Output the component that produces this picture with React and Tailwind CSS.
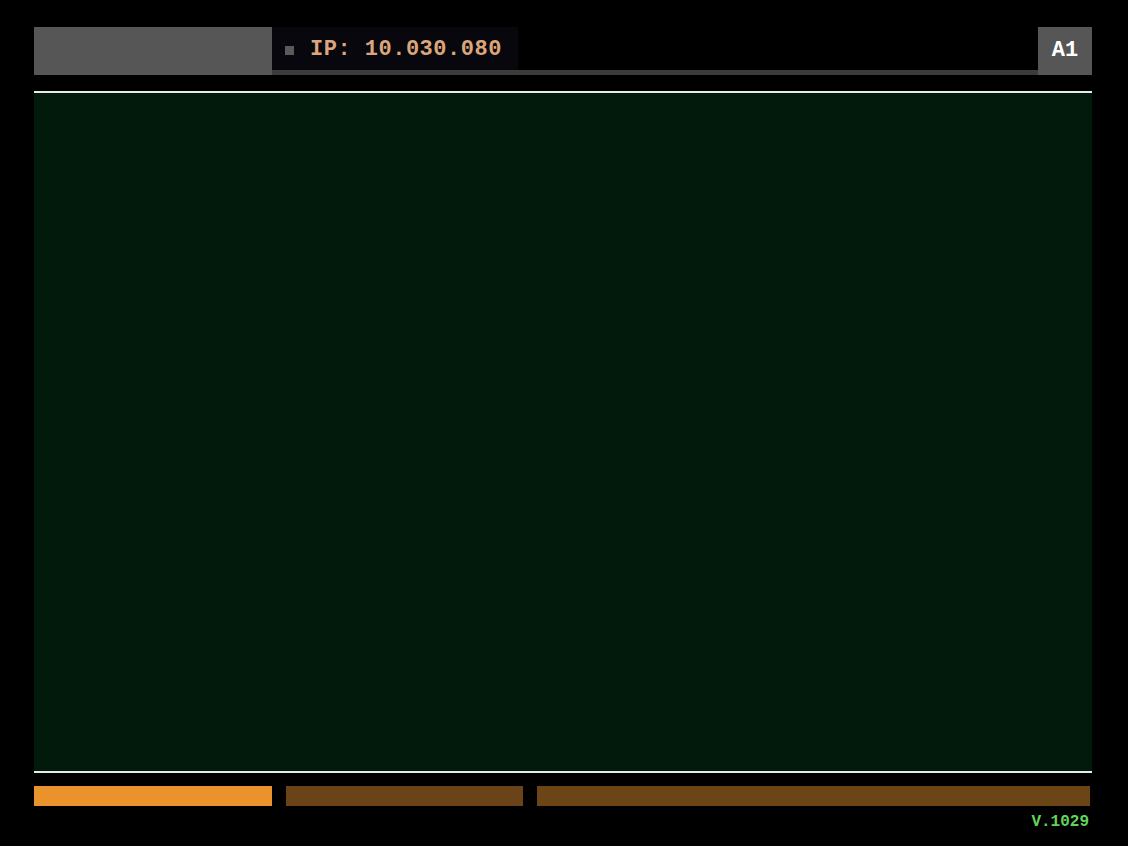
import React from 'react';

export default function App() {
    return (
        <div className="w-[1128px] h-[846px] bg-black pt-[27px] pl-[34px] pr-[36px] font-['Liberation_Mono',monospace]">
            {/* Top bar */}
            <div className="flex h-[48px]">
                <div className="w-[238px] bg-[#565656]"></div>
                <div className="flex-1 flex flex-col">
                    <div className="flex-1 flex">
                        <div className="w-[246px] bg-[#07070d] flex items-center pl-[13px] pt-[3px] gap-[16px]">
                            <div className="w-[9px] h-[9px] bg-[#5a5a5a]"></div>
                            <span className="text-[22px] font-bold text-[#dca67a] leading-none tracking-[0.5px]">IP: 10.030.080</span>
                        </div>
                        <div className="flex-1"></div>
                    </div>
                    <div className="h-[5px] bg-[#3c3c3c]"></div>
                </div>
                <div className="w-[54px] bg-[#565656] flex items-center justify-center">
                    <span className="text-[22px] font-bold text-white leading-none">A1</span>
                </div>
            </div>

            {/* Main panel */}
            <div className="mt-[16px] border-y-2 border-[#e8ece6] h-[682px] bg-[#021a0c]"></div>

            {/* Bottom bars */}
            <div className="flex mt-[13px] h-[20px] gap-[14px] pr-[2px]">
                <div className="w-[238px] bg-[#ea922b]"></div>
                <div className="w-[237px] bg-[#6a4416]"></div>
                <div className="flex-1 bg-[#6c4517]"></div>
            </div>
            <div className="flex justify-end pr-[3px] mt-[8px]">
                <span className="text-[16px] font-bold text-[#62d45c] leading-none">V.1029</span>
            </div>
        </div>
    );
}
